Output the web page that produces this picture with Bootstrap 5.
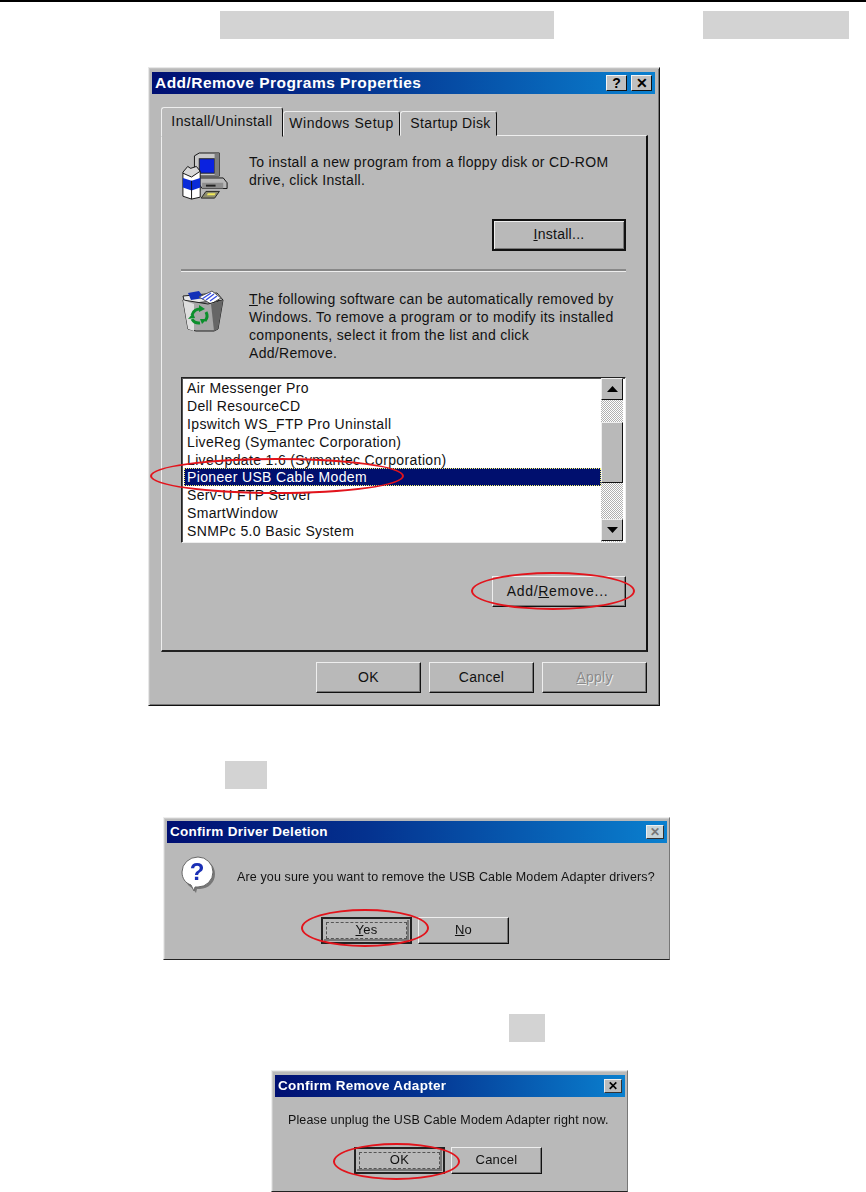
<!doctype html>
<html lang="en">
<head>
<meta charset="utf-8">
<title>Remove USB Cable Modem</title>
<link href="https://cdn.jsdelivr.net/npm/bootstrap@5.3.0/dist/css/bootstrap.min.css" rel="stylesheet">
<style>
html,body{height:1192px;overflow:hidden;background:#fff}
body{font-family:"Liberation Sans",Arial,sans-serif;color:#111;font-size:14px;line-height:18px}
.page-rule{height:2px;background:#000}
.mask{height:28px;background:#d3d3d3}
.masks-top{margin-top:9px;padding-left:220px}
.mask-a{width:334px}.mask-b{width:146px;margin-left:149px}
.mask-yes{width:42px;margin:55px 0 0 225px}
.mask-ok{width:36px;margin:54px 0 0 509px}
.win{position:relative;background:#b9b9b9;border:1px solid;border-color:#e8e8e8 #111 #111 #e8e8e8}
.win-main{width:512px;height:639px;margin:28px 0 0 148px;padding:4px 4px 0 3px;box-shadow:inset 1px 1px 0 #c4c4c4,inset -1px -1px 0 #777}
.tbar{height:22px;background:linear-gradient(90deg,#000f72 0,#04328f 40%,#0a80cf 100%);color:#fff;font-weight:700;padding:0 3px;font-size:15.5px;letter-spacing:.03em}
.tbar-btn{width:21px;height:16px;background:#c0c0c0;border:1px solid;border-color:#f4f4f4 #111 #111 #f4f4f4;font-size:14px;font-weight:700;line-height:14px;color:#000;text-align:center;letter-spacing:0}
.tab-row{margin:13px 0 0 9px;height:29px;border:0;--bs-nav-tabs-border-width:0}
.tab-row .nav-link{color:#111;background:#b9b9b9;border:1px solid;border-color:#eee #111 transparent #eee;border-radius:3px 3px 0 0;padding:0;text-align:center;height:25px;line-height:23px;margin:4px 0 0 0;font-size:14px}
.tab-row .nav-link.active{background:#b9b9b9;color:#111;border-color:#eee #111 #b9b9b9 #eee;height:30px;margin-top:0;line-height:27px;position:relative;z-index:1}
.tab-one{width:122px;letter-spacing:.03em}
.tab-two{width:117px;margin-right:3px;letter-spacing:.04em}
.tab-row .nav-link.tab-three{width:97px;letter-spacing:.024em;padding-left:4px}
.panel{width:487px;height:517px;margin:-1px 0 0 9px;border:1px solid;border-width:1px 2px 2px 1px;border-color:#eee #111 #222 #eee;padding:16px 20px 0 19px}
.ico-a{width:48px;flex:none;margin-right:20px}
.note{letter-spacing:.022em}
.note-top{margin-top:1px}
.win-btn{background:#b9b9b9;color:#111;border:1px solid;border-color:#eee #111 #111 #eee;border-radius:0;padding:0 0 2px;font-size:14px;line-height:18px;box-shadow:inset -1px -1px 0 #777;font-family:inherit;letter-spacing:.02em}
.win-btn:hover,.win-btn:disabled{background:#b9b9b9;color:#111;border-color:#eee #111 #111 #eee;opacity:1}
.btn-wide{width:134px;height:32px}
.btn-add{height:31px;letter-spacing:.05em;padding-right:3px}
.btn-def,.btn-def:hover{border:2px solid #111;box-shadow:inset 1px 1px 0 #eee,inset -1px -1px 0 #777}
.btn-foot{width:105px;height:31px}
.row-install{margin-top:17px}
.sep{height:3px;background:#888;border:0;border-bottom:1px solid #eee;margin:18px 0 0;opacity:1}
.sec2{margin-top:18px}
.lbox{height:166px;margin-top:15px;background:#fff;border:1px solid;border-color:#222 #eee #eee #222;box-shadow:inset 1px 1px 0 #555;padding:0 2px}
.lbox .list-group{flex:1;border-radius:0;padding-top:1px;--bs-list-group-bg:transparent}
.lbox .list-group-item{border:0;padding:0 0 0 3px;height:18px;line-height:18px;background:transparent;color:#111;font-size:14px;letter-spacing:.025em}
.lbox .list-group-item.active{background:#000f6e;color:#fff;outline:1px dotted #f7f76a;outline-offset:-1px;z-index:auto}
.sbar{width:22px;flex:none;background:repeating-conic-gradient(#b0b0b0 0 25%,#fff 0 50%) 0 0/2px 2px}
.sb-btn{height:22px;background:#b9b9b9;border:1px solid;border-color:#eee #111 #111 #eee;width:22px}
.sb-thumb{height:61px;width:22px;background:#b9b9b9;border:1px solid;border-color:#eee #111 #111 #eee;margin:22px 0 36px}
.row-add{margin-top:33px}
.row-foot{margin:10px 0 0 0;padding:0 8px 0 0;gap:8px}
.win-btn.dim{color:#8a8a8a;text-shadow:1px 1px 0 #eee}
.oval{position:absolute;border:2px solid #e2141c;border-radius:50%;pointer-events:none;z-index:3}
.oval-list{left:1px;top:390px;width:254px;height:36px}
.oval-add{left:322px;top:504px;width:164px;height:38px}
.soft{filter:blur(.7px)}
.dlg{margin-top:28px;padding:3px 2px 0 3px;box-shadow:inset 1px 1px 0 #ccc;border-color:#eee #777 #222 #eee}
.dlg-del{width:507px;height:143px;margin-left:163px}
.dlg-rem{width:357px;height:122px;margin-left:271px;padding-top:4px}
.tbar-sm{font-size:13.5px;letter-spacing:.02em;padding:0 3px}
.tbar-x{width:18px;height:14px;font-size:12px;line-height:12px;background:#bcbcbc;border-color:#eee #333 #333 #eee}
.tbar-x-faint{color:#777;background:#c8d4d8}
.q-ico{width:38px;flex:none;margin-right:19px}
.dlg-msg{font-size:12.5px;letter-spacing:.01em}
.msg-del{padding:13px 0 0 13px}
.msg-del-text{margin-top:3px}
.btn-dlg{width:91px;height:27px;font-size:13px}
.btn-focus,.btn-focus:hover{border:2px solid #222;box-shadow:inset 0 0 0 1px #b9b9b9,inset -1px -1px 0 2px #777;outline:1px dashed #555;outline-offset:-6px}
.btns-del{margin:23px 0 0 154px;gap:6px}
.oval-yes{left:137px;top:91px;width:128px;height:38px}
.msg-rem{padding:14px 0 0 13px}
.btns-rem{margin:18px 0 0 79px;gap:6px}
.oval-ok{left:61px;top:72px;width:127px;height:37px}
</style>
</head>
<body>
<div class="page-rule"></div>
<div class="d-flex masks-top"><div class="mask mask-a"></div><div class="mask mask-b"></div></div>

<section class="win win-main">
  <div class="tbar d-flex align-items-center justify-content-between">
    <span>Add/Remove Programs Properties</span>
    <span class="d-flex"><span class="tbar-btn me-1">?</span><span class="tbar-btn">✕</span></span>
  </div>
  <ul class="nav nav-tabs tab-row">
    <li class="nav-item"><a class="nav-link tab-one active" href="#">Install/Uninstall</a></li>
    <li class="nav-item"><a class="nav-link tab-two" href="#">Windows Setup</a></li>
    <li class="nav-item"><a class="nav-link tab-three" href="#">Startup Disk</a></li>
  </ul>
  <div class="panel">
    <div class="d-flex">
      <svg class="ico-a" width="48" height="50" viewBox="0 0 50 52" role="img" aria-label="Install">
        <path d="M14 4l5-3h21v24H14z" fill="#c8c8c8" stroke="#111"/>
        <rect x="19" y="7" width="16" height="15" fill="#0a22e0" stroke="#222"/>
        <path d="M40 1v24l-5 0V2z" fill="#7d7d7d"/>
        <path d="M18 27h26l4 5v6H22l-4-6z" fill="#b8b8b8" stroke="#111"/>
        <path d="M22 32h22v6H22z" fill="#8e8e8e"/>
        <path d="M26 34h10v2H26z" fill="#222"/>
        <path d="M2 22l8-5 10 3v27l-9 2-9-3z" fill="#fff" stroke="#111"/>
        <path d="M2 27l9 3 9-3v10l-9 3-9-3z" fill="#0a2bd8"/>
        <path d="M2 22l9 4 9-6-4-5-6 2-3-2-5 6z" fill="#d8d8d8" stroke="#111"/>
        <path d="M11 30v19" stroke="#111"/>
        <path d="M26 41h14l-5 7H21z" fill="#8c8c70" stroke="#222"/>
        <path d="M28 43h8l-1 2h-8z" fill="#f2ea5a"/>
      </svg>
      <p class="note mb-0 note-top">To install a new program from a floppy disk or CD-ROM<br>drive, click Install.</p>
    </div>
    <div class="d-flex justify-content-end row-install"><button class="btn win-btn btn-wide btn-def" type="button"><u>I</u>nstall...</button></div>
    <hr class="sep">
    <div class="d-flex sec2">
      <svg class="ico-a" width="48" height="50" viewBox="0 0 48 50" role="img" aria-label="Recycle bin">
        <path d="M2 6L36 3l6 7-38 4z" fill="#e8e8e8" stroke="#222"/>
        <path d="M7 3l11-2 5 7-13 2z" fill="#1230b8"/>
        <path d="M18 7l13-6 9 7-10 6z" fill="#fff" stroke="#555"/>
        <path d="M21 9l9-6M25 10l8-6M29 11l7-5" stroke="#3a50e0" stroke-width="1.4"/>
        <path d="M2 10l5 29 8 2h18l4-2 5-29-15 4z" fill="#a8a8a8" stroke="#222"/>
        <path d="M2 10l5 29 6 2V14z" fill="#dedede"/>
        <path d="M30 14l12-4-5 29-4 2z" fill="#666"/>
        <g fill="none" stroke="#0c8f2c" stroke-width="3">
          <path d="M11 25a8 8 0 0 1 9-6"/><path d="M25 22a8 8 0 0 1-1 9"/><path d="M19 33a8 8 0 0 1-8-4"/>
        </g>
        <g fill="#0c8f2c"><path d="M18 15l6 4-6 3z"/><path d="M21 34l5-5-7 0z"/><path d="M7 29l7-1-2-5z"/></g>
      </svg>
      <p class="note mb-0"><u>T</u>he following software can be automatically removed by<br>Windows. To remove a program or to modify its installed<br>components, select it from the list and click<br>Add/Remove.</p>
    </div>
    <div class="lbox d-flex">
      <ul class="list-group">
        <li class="list-group-item">Air Messenger Pro</li>
        <li class="list-group-item">Dell ResourceCD</li>
        <li class="list-group-item">Ipswitch WS_FTP Pro Uninstall</li>
        <li class="list-group-item">LiveReg (Symantec Corporation)</li>
        <li class="list-group-item">LiveUpdate 1.6 (Symantec Corporation)</li>
        <li class="list-group-item active">Pioneer USB Cable Modem</li>
        <li class="list-group-item">Serv-U FTP Server</li>
        <li class="list-group-item">SmartWindow</li>
        <li class="list-group-item">SNMPc 5.0 Basic System</li>
      </ul>
      <div class="sbar d-flex flex-column">
        <div class="sb-btn d-flex align-items-center justify-content-center"><svg width="11" height="6" viewBox="0 0 11 6"><path d="M5.500 0L11 6H0z" fill="#000"/></svg></div>
        <div class="sb-thumb"></div>
        <div class="sb-btn d-flex align-items-center justify-content-center"><svg width="11" height="6" viewBox="0 0 11 6"><path d="M0 0h11L5.500 6z" fill="#000"/></svg></div>
      </div>
    </div>
    <div class="d-flex justify-content-end row-add"><button class="btn win-btn btn-wide btn-add" type="button">Add/<u>R</u>emove...</button></div>
  </div>
  <div class="d-flex justify-content-end row-foot">
    <button class="btn win-btn btn-foot" type="button">OK</button>
    <button class="btn win-btn btn-foot" type="button">Cancel</button>
    <button class="btn win-btn btn-foot dim" type="button" disabled><u>A</u>pply</button>
  </div>
  <div class="oval oval-list"></div>
  <div class="oval oval-add"></div>
</section>

<div class="mask mask-yes"></div>

<section class="win dlg dlg-del">
  <div class="soft">
    <div class="tbar tbar-sm d-flex align-items-center justify-content-between"><span>Confirm Driver Deletion</span><span class="tbar-btn tbar-x tbar-x-faint">✕</span></div>
    <div class="d-flex align-items-center msg-del">
      <svg class="q-ico" width="38" height="38" viewBox="0 0 38 38" role="img" aria-label="Question">
        <path d="M20 3a15 15 0 0 1 0 30l-3 0-1 4-4-5C7 29 4 24 4 18A16 15 0 0 1 20 3z" fill="#777"/>
        <path d="M18 1a15 15 0 0 1 0 30l-3 0-1 4-3-6C5 27 2 22 2 16A16 15 0 0 1 18 1z" fill="#fff" stroke="#666"/>
        <text x="17" y="24" text-anchor="middle" font-family="Liberation Sans" font-weight="700" font-size="24" fill="#1a2fb5">?</text>
      </svg>
      <p class="dlg-msg mb-0 msg-del-text">Are you sure you want to remove the USB Cable Modem Adapter drivers?</p>
    </div>
    <div class="d-flex btns-del">
      <button class="btn win-btn btn-dlg btn-focus" type="button"><u>Y</u>es</button>
      <button class="btn win-btn btn-dlg" type="button"><u>N</u>o</button>
    </div>
  </div>
  <div class="oval oval-yes"></div>
</section>

<div class="mask mask-ok"></div>

<section class="win dlg dlg-rem">
  <div class="soft">
    <div class="tbar tbar-sm d-flex align-items-center justify-content-between"><span>Confirm Remove Adapter</span><span class="tbar-btn tbar-x">✕</span></div>
    <p class="dlg-msg mb-0 msg-rem">Please unplug the USB Cable Modem Adapter right now.</p>
    <div class="d-flex btns-rem">
      <button class="btn win-btn btn-dlg btn-focus" type="button">OK</button>
      <button class="btn win-btn btn-dlg" type="button">Cancel</button>
    </div>
  </div>
  <div class="oval oval-ok"></div>
</section>

<script src="https://cdn.jsdelivr.net/npm/bootstrap@5.3.0/dist/js/bootstrap.bundle.min.js"></script>
</body>
</html>
